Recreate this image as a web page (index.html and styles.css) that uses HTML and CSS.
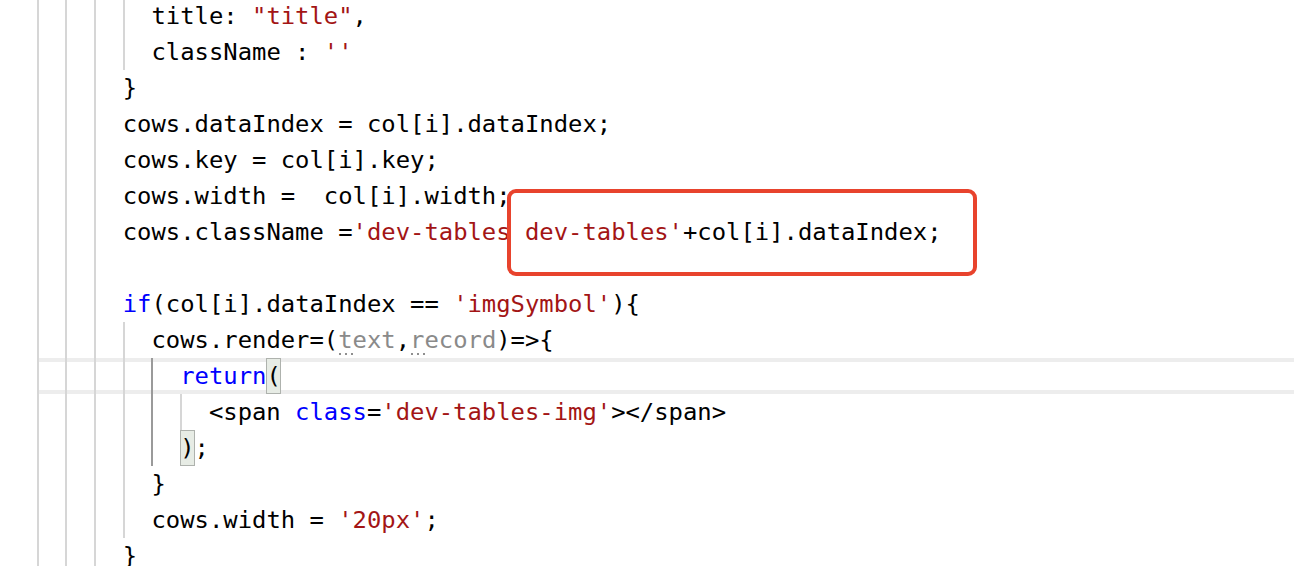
FILE: index.html
```html
<!DOCTYPE html>
<html lang="en">
<head>
<meta charset="utf-8">
<title>Editor</title>
<link rel="stylesheet" href="styles.css">
</head>
<body>
<div class="editor">
  <div class="code">
    <div class="line"><span class="g"></span><span class="g"></span><span class="g"></span><span class="g"></span><span class="t">title: <span class="s">"title"</span>,</span></div>
    <div class="line"><span class="g"></span><span class="g"></span><span class="g"></span><span class="g"></span><span class="t">className : <span class="s">''</span></span></div>
    <div class="line"><span class="g"></span><span class="g"></span><span class="g"></span><span class="t">}</span></div>
    <div class="line"><span class="g"></span><span class="g"></span><span class="g"></span><span class="t">cows.dataIndex = col[i].dataIndex;</span></div>
    <div class="line"><span class="g"></span><span class="g"></span><span class="g"></span><span class="t">cows.key = col[i].key;</span></div>
    <div class="line"><span class="g"></span><span class="g"></span><span class="g"></span><span class="t">cows.width =  col[i].width;</span></div>
    <div class="line"><span class="g"></span><span class="g"></span><span class="g"></span><span class="t">cows.className =<span class="s">'dev-tables dev-tables'</span>+col[i].dataIndex;</span></div>
    <div class="line"><span class="g"></span><span class="g"></span><span class="g"></span></div>
    <div class="line"><span class="g"></span><span class="g"></span><span class="g"></span><span class="t"><span class="k">if</span>(col[i].dataIndex == <span class="s">'imgSymbol'</span>){</span></div>
    <div class="line"><span class="g"></span><span class="g"></span><span class="g"></span><span class="g"></span><span class="t">cows.render=(<span class="u">text</span>,<span class="u">record</span>)=&gt;{</span></div>
    <div class="line current"><span class="g"></span><span class="g"></span><span class="g"></span><span class="g"></span><span class="g dark"></span><span class="t"><span class="k">return</span><span class="m">(</span></span></div>
    <div class="line"><span class="g"></span><span class="g"></span><span class="g"></span><span class="g"></span><span class="g dark"></span><span class="g"></span><span class="t">&lt;span <span class="k">class</span>=<span class="s">'dev-tables-img'</span>&gt;&lt;/span&gt;</span></div>
    <div class="line"><span class="g"></span><span class="g"></span><span class="g"></span><span class="g"></span><span class="g dark"></span><span class="t"><span class="m">)</span>;</span></div>
    <div class="line"><span class="g"></span><span class="g"></span><span class="g"></span><span class="g"></span><span class="t">}</span></div>
    <div class="line"><span class="g"></span><span class="g"></span><span class="g"></span><span class="g"></span><span class="t">cows.width = <span class="s">'20px'</span>;</span></div>
    <div class="line"><span class="g"></span><span class="g"></span><span class="g"></span><span class="t">}</span></div>
    <div class="mark"></div>
  </div>
</div>
</body>
</html>
```

FILE: styles.css
```css
html, body {
  margin: 0;
  padding: 0;
  background: #ffffff;
}

.editor {
  width: 1294px;
  height: 566px;
  overflow: hidden;
}

.code {
  position: relative;
  margin-top: -2px;
  padding-left: 36.6px;
  font-family: "DejaVu Sans Mono", "Liberation Mono", monospace;
  font-size: 23.87px;
  color: #000000;
}

.line {
  position: relative;
  display: flex;
  height: 36px;
  line-height: 36px;
  white-space: pre;
}

.g {
  position: relative;
  flex: 0 0 auto;
  width: 2ch;
  height: 36px;
  box-sizing: border-box;
  border-left: 2px solid #d6d6d6;
}

.g.dark {
  border-left-color: #9a9a9a;
}

.t {
  position: relative;
}

.s { color: #a31515; }
.k { color: #0000ff; }

.u {
  position: relative;
  color: #8a8a8a;
}

.u::after {
  content: "";
  position: absolute;
  left: 1px;
  top: 27px;
  width: 16px;
  height: 2px;
  background: repeating-linear-gradient(90deg, #8f8f8f 0 2px, transparent 2px 6px);
}

.m {
  display: inline-block;
  width: 1ch;
  height: 36px;
  vertical-align: top;
  background: #e7ece5;
  box-shadow: inset 0 0 0 1px #aeb2ad;
}

.current::before {
  content: "";
  position: absolute;
  left: 2.4px;
  right: 0;
  top: 0;
  height: 36px;
  box-sizing: border-box;
  border-top: 4px solid #ededed;
  border-bottom: 4px solid #ededed;
}

.mark {
  position: absolute;
  left: 507px;
  top: 191px;
  width: 470px;
  height: 87px;
  box-sizing: border-box;
  border: 4.5px solid #e8432d;
  border-radius: 9px;
}
```
